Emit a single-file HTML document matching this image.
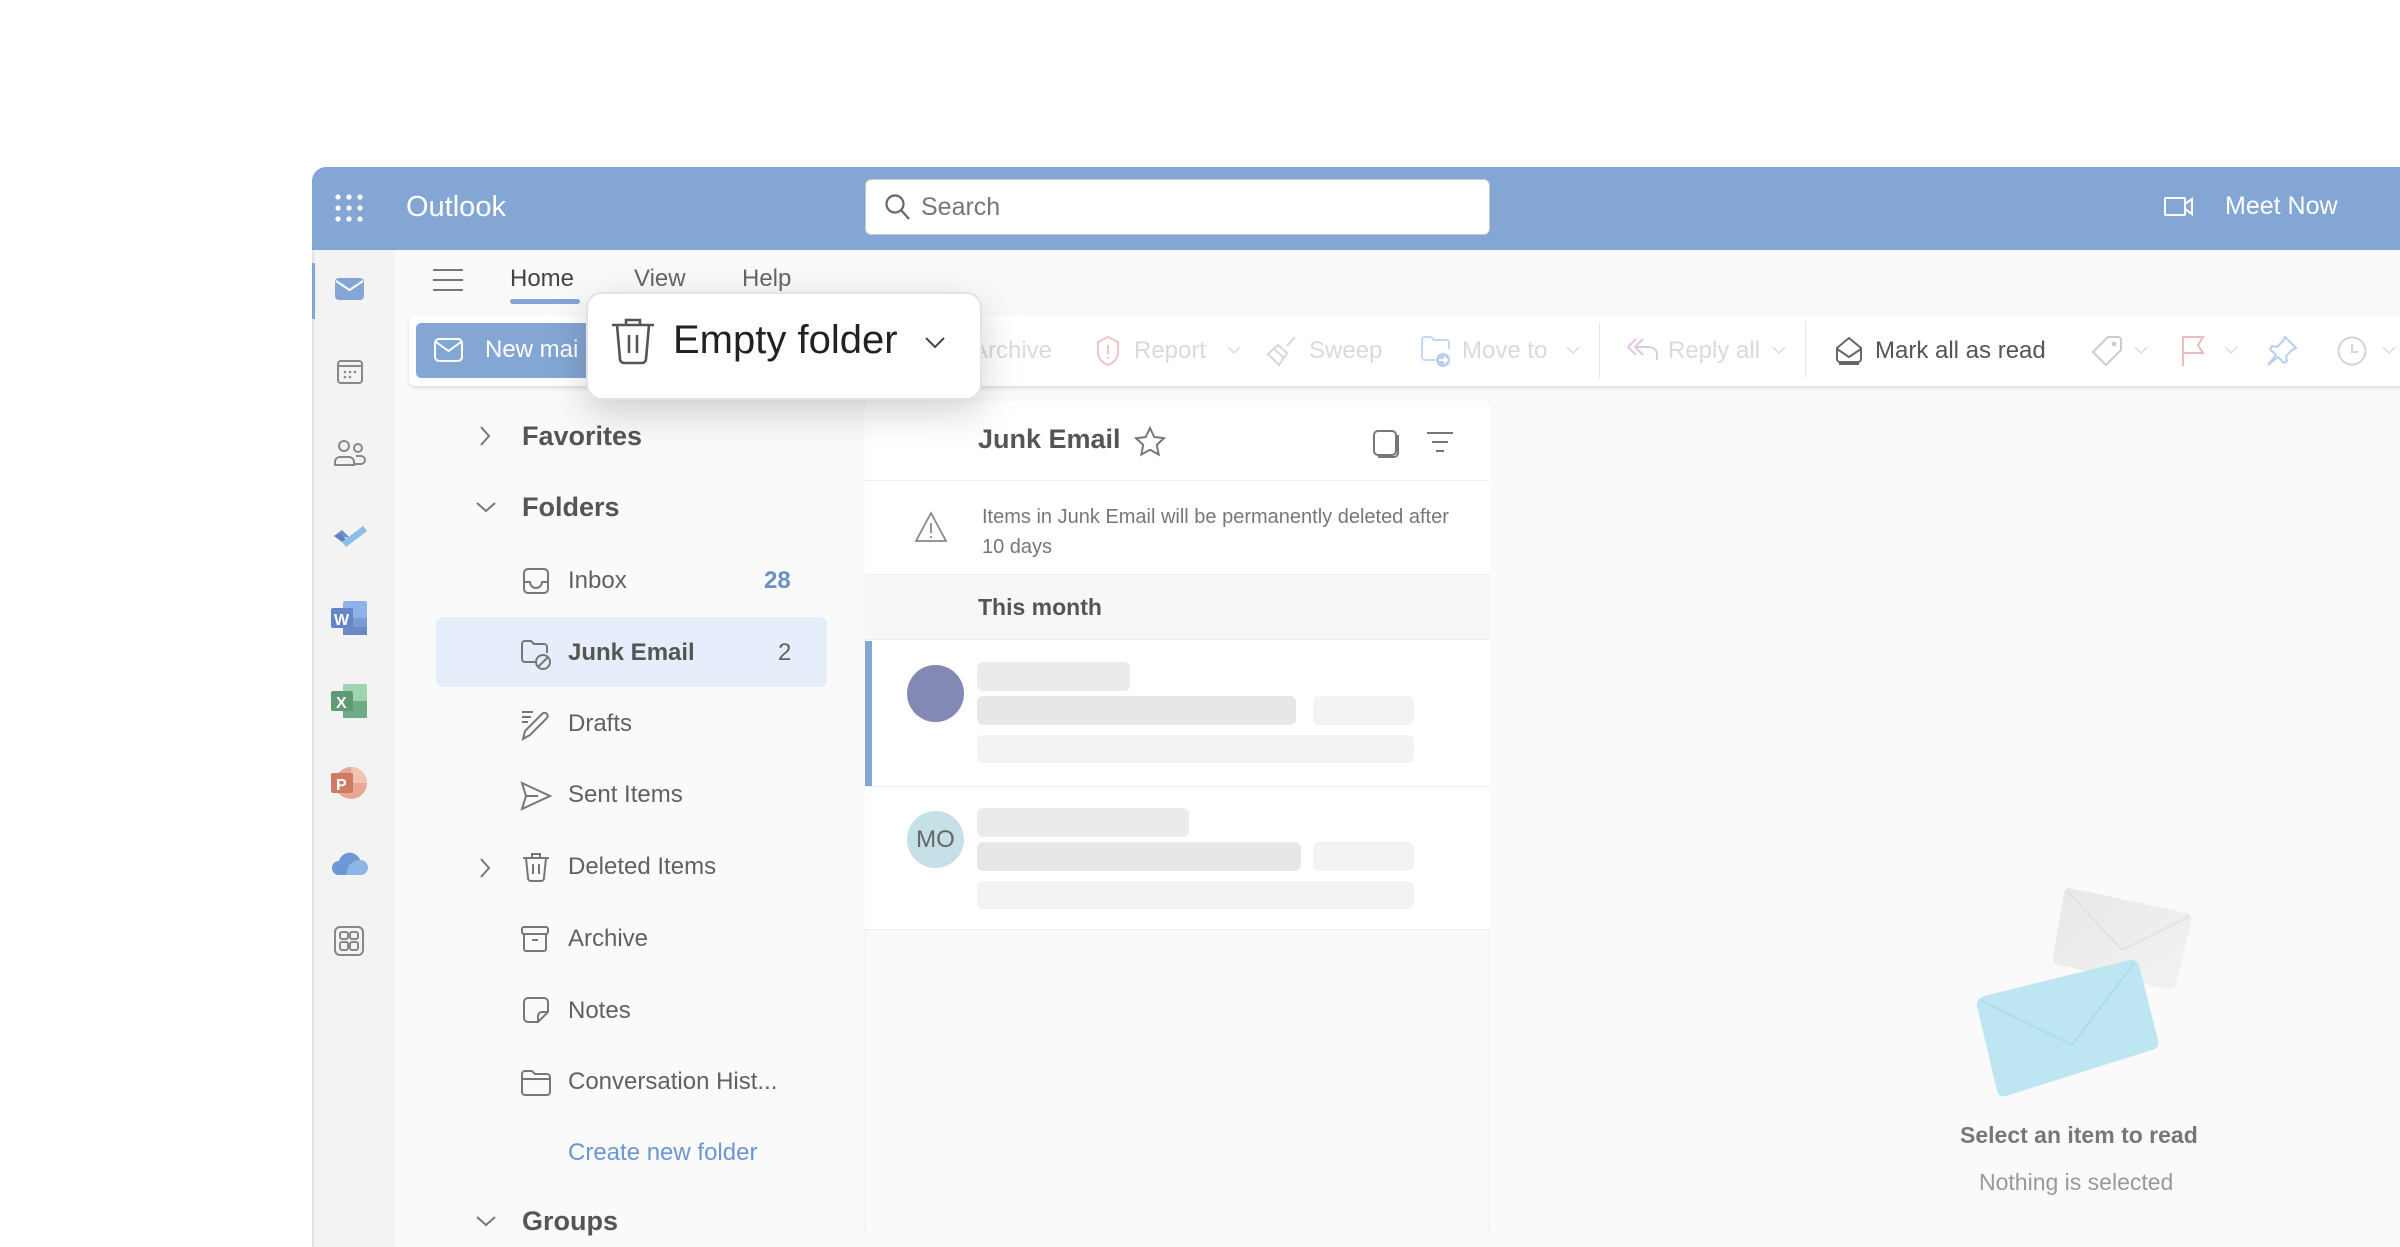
<!DOCTYPE html>
<html><head><meta charset="utf-8"><style>
*{box-sizing:border-box;margin:0;padding:0}
body{width:2400px;height:1226px;background:#fff;position:relative;overflow:hidden;font-family:"Liberation Sans",sans-serif;color:#616161}
.a{position:absolute}
svg{position:absolute;overflow:visible}
.t{position:absolute;white-space:nowrap}
.fold{font-size:24px;color:#616161}
.tb{font-size:24px;color:#dadada}
.sk{position:absolute;border-radius:6px}
</style></head><body>
<div class="a" style="left:312px;top:167px;width:2100px;height:1080px;background:#fafafa;border-top-left-radius:14px;overflow:hidden">
 <div class="a" style="left:0;top:0;width:2100px;height:83px;background:#84a6d4"></div>
 <div class="a" style="left:0;top:83px;width:83px;height:1000px;background:#f3f3f3;border-left:2px solid #e4e4e4"></div>
 <div class="a" style="left:0;top:96px;width:3px;height:56px;background:#84a6d4"></div>
</div>
<svg style="left:335px;top:194px" width="28" height="28" fill="#fff"><circle cx="3" cy="3" r="2.6"/><circle cx="14" cy="3" r="2.6"/><circle cx="25" cy="3" r="2.6"/><circle cx="3" cy="14" r="2.6"/><circle cx="14" cy="14" r="2.6"/><circle cx="25" cy="14" r="2.6"/><circle cx="3" cy="25" r="2.6"/><circle cx="14" cy="25" r="2.6"/><circle cx="25" cy="25" r="2.6"/></svg>
<div class="t" style="left:406px;top:191px;font-size:29px;color:#fff">Outlook</div>
<div class="a" style="left:865px;top:179px;width:625px;height:56px;background:#fff;border-radius:6px;border:1px solid #c8c8c8"></div>
<svg style="left:883px;top:193px" width="28" height="28" fill="none" stroke="#666" stroke-width="2.2"><circle cx="12" cy="11" r="8.5"/><path d="M18 17l8 9"/></svg>
<div class="t" style="left:921px;top:193px;font-size:25px;color:#777">Search</div>
<svg style="left:2164px;top:197px" width="30" height="20" fill="none" stroke="#fff" stroke-width="2"><rect x="1" y="1" width="20" height="17" rx="1"/><path d="M21 7l7-5v15l-7-5"/></svg>
<div class="t" style="left:2225px;top:192px;font-size:25px;color:#fff">Meet Now</div>
<svg style="left:335px;top:278px" width="30" height="22"><rect x="0" y="0" width="29" height="22" rx="4" fill="#84a6d4"/><path d="M1 3l13.5 9L28 3" stroke="#fff" stroke-width="2" fill="none"/></svg>
<svg style="left:337px;top:360px" width="26" height="24" fill="none" stroke="#888" stroke-width="2"><rect x="1" y="1" width="24" height="22" rx="3"/><path d="M1 6h24"/><g fill="#888" stroke="none"><circle cx="8" cy="12" r="1.3"/><circle cx="13" cy="12" r="1.3"/><circle cx="18" cy="12" r="1.3"/><circle cx="8" cy="17" r="1.3"/><circle cx="13" cy="17" r="1.3"/></g></svg>
<svg style="left:334px;top:440px" width="32" height="26" fill="none" stroke="#888" stroke-width="2"><circle cx="10" cy="6" r="5"/><path d="M1 25v-3a5 5 0 015-5h9a5 5 0 015 5v3z"/><circle cx="24" cy="8" r="4"/><path d="M20 24h7a4 4 0 004-4 4 4 0 00-4-4h-5"/></svg>
<svg style="left:332px;top:522px" width="36" height="26"><path d="M2 14l8-6 8 8z" fill="#6e8ed0"/><path d="M10 20L31 4l4 5L14 25z" fill="#8cbde9"/><path d="M2 14l8 6 4-3-6-5z" fill="#5f7fc4"/></svg>
<svg style="left:331px;top:601px" width="36" height="34"><rect x="12" y="0" width="24" height="34" rx="2" fill="#8fb3e8"/><rect x="12" y="17" width="24" height="9" fill="#7b9ad6"/><rect x="12" y="26" width="24" height="8" fill="#6c88c6"/><rect x="0" y="7" width="22" height="20" rx="2" fill="#6486c9"/><text x="3" y="24" font-size="16" font-weight="bold" fill="#fff" font-family="Liberation Sans">W</text></svg>
<svg style="left:331px;top:684px" width="36" height="34"><rect x="12" y="0" width="24" height="34" rx="2" fill="#9fd4b0"/><rect x="12" y="17" width="24" height="17" fill="#6fab86"/><rect x="0" y="7" width="22" height="20" rx="2" fill="#5e9b75"/><text x="5" y="24" font-size="16" font-weight="bold" fill="#fff" font-family="Liberation Sans">X</text></svg>
<svg style="left:331px;top:766px" width="36" height="34"><circle cx="20" cy="17" r="16" fill="#e8a792"/><path d="M20 1a16 16 0 0116 16H20z" fill="#f3c3b2"/><rect x="0" y="7" width="22" height="20" rx="2" fill="#cf7a62"/><text x="5" y="24" font-size="16" font-weight="bold" fill="#fff" font-family="Liberation Sans">P</text></svg>
<svg style="left:331px;top:852px" width="38" height="24"><path d="M8 23a7 7 0 010-14 11 11 0 0121-1 7.5 7.5 0 011 15z" fill="#8db5e6"/><path d="M8 23a7 7 0 010-14 11 11 0 0121-1c-8 0-12 5-14 15z" fill="#6f97d5"/></svg>
<svg style="left:334px;top:926px" width="30" height="30" fill="none" stroke="#888" stroke-width="2"><rect x="1" y="1" width="28" height="28" rx="5"/><rect x="6" y="6" width="8" height="7" rx="2"/><rect x="16" y="6" width="8" height="7" rx="2"/><rect x="6" y="16" width="8" height="8" rx="2"/><rect x="16" y="16" width="8" height="8" rx="2"/></svg>
<svg style="left:433px;top:269px" width="30" height="22" stroke="#777" stroke-width="2"><path d="M0 1h30M0 11h30M0 21h30"/></svg>
<div class="t" style="left:510px;top:265px;font-size:24px;color:#444">Home</div>
<div class="a" style="left:510px;top:299px;width:70px;height:5px;border-radius:3px;background:#84a6d4"></div>
<div class="t" style="left:634px;top:265px;font-size:24px;color:#666">View</div>
<div class="t" style="left:742px;top:265px;font-size:24px;color:#666">Help</div>
<div class="a" style="left:409px;top:315px;width:2000px;height:71px;background:#fff;border-radius:6px;box-shadow:0 2px 4px rgba(0,0,0,.12)"></div>
<div class="a" style="left:416px;top:323px;width:190px;height:55px;background:#84a6d4;border-radius:5px"></div>
<svg style="left:434px;top:338px" width="30" height="24" fill="none" stroke="#fff" stroke-width="2"><rect x="1" y="1" width="27" height="22" rx="4"/><path d="M2 4l12.5 9L27 4"/></svg>
<div class="t" style="left:485px;top:336px;font-size:24px;color:#fff">New mai</div>
<div class="t tb" style="left:972px;top:337px">Archive</div>
<svg style="left:1096px;top:336px" width="24" height="30" fill="none" stroke="#efc4c4" stroke-width="2"><path d="M12 1l10 5v10c0 7-5 11-10 13C7 27 2 23 2 16V6z"/><path d="M12 9v9M12 21v2"/></svg>
<div class="t tb" style="left:1134px;top:337px">Report</div>
<svg style="left:1227px;top:346px" width="14" height="8" fill="none" stroke="#ddd" stroke-width="1.5"><path d="M1 1l6 6 6-6"/></svg>
<svg style="left:1267px;top:336px" width="30" height="32" fill="none" stroke="#d8d8d8" stroke-width="2"><path d="M20 10L28 1M1 18l10-9 9 8-8 12z"/><path d="M8 14l9 8"/></svg>
<div class="t tb" style="left:1309px;top:337px">Sweep</div>
<svg style="left:1421px;top:336px" width="32" height="32" fill="none" stroke="#c5d7f2" stroke-width="2"><path d="M14 24H4a3 3 0 01-3-3V4a3 3 0 013-3h6l3 3h12a3 3 0 013 3v6"/><circle cx="22" cy="24" r="7" fill="#b9cfee" stroke="none"/><path d="M18 24h8M23 21l3 3-3 3" stroke="#fff"/></svg>
<div class="t tb" style="left:1462px;top:337px">Move to</div>
<svg style="left:1566px;top:346px" width="14" height="8" fill="none" stroke="#ddd" stroke-width="1.5"><path d="M1 1l6 6 6-6"/></svg>
<div class="a" style="left:1599px;top:322px;width:1px;height:56px;background:#e6e6e6"></div>
<svg style="left:1627px;top:338px" width="32" height="24" fill="none" stroke="#e3c6ea" stroke-width="2"><path d="M9 1L1 9l8 8M16 1L8 9l8 8M8 9h14a8 8 0 018 8v5"/></svg>
<div class="t tb" style="left:1668px;top:337px">Reply all</div>
<svg style="left:1772px;top:346px" width="14" height="8" fill="none" stroke="#ddd" stroke-width="1.5"><path d="M1 1l6 6 6-6"/></svg>
<div class="a" style="left:1805px;top:322px;width:1px;height:56px;background:#e6e6e6"></div>
<svg style="left:1834px;top:336px" width="30" height="30" fill="none" stroke="#666" stroke-width="2"><path d="M3 12l12-10 12 10v11a3 3 0 01-3 3H6a3 3 0 01-3-3z"/><path d="M3 13l12 8 12-8"/><path d="M5 28h20"/></svg>
<div class="t" style="left:1875px;top:337px;font-size:24px;color:#555">Mark all as read</div>
<svg style="left:2092px;top:336px" width="30" height="30" fill="none" stroke="#ccc" stroke-width="2"><path d="M16 1h10a3 3 0 013 3v10L14 29 1 16z"/><circle cx="22" cy="8" r="1.5" fill="#ccc"/></svg>
<svg style="left:2134px;top:346px" width="14" height="8" fill="none" stroke="#ddd" stroke-width="1.5"><path d="M1 1l6 6 6-6"/></svg>
<svg style="left:2181px;top:336px" width="24" height="30" fill="none" stroke="#eebcbc" stroke-width="2"><path d="M2 30V1h20l-5 8 5 8H2"/></svg>
<svg style="left:2224px;top:346px" width="14" height="8" fill="none" stroke="#ddd" stroke-width="1.5"><path d="M1 1l6 6 6-6"/></svg>
<svg style="left:2267px;top:336px" width="30" height="30" fill="none" stroke="#b7cff0" stroke-width="2"><path d="M18 1l11 11-4 2-6 6 1 5-3 2-6-6-10 8 8-10-6-6 2-3 5 1 6-6z"/></svg>
<svg style="left:2337px;top:336px" width="30" height="30" fill="none" stroke="#d4d4d4" stroke-width="2"><circle cx="15" cy="15" r="13.5"/><path d="M15 8v8h6"/></svg>
<svg style="left:2382px;top:346px" width="14" height="8" fill="none" stroke="#ddd" stroke-width="1.5"><path d="M1 1l6 6 6-6"/></svg>
<svg style="left:480px;top:426px" width="10" height="20" fill="none" stroke="#777" stroke-width="2"><path d="M1 1l8 9-8 9"/></svg>
<div class="t" style="left:522px;top:421px;font-size:27px;color:#555;font-weight:600">Favorites</div>
<svg style="left:476px;top:502px" width="20" height="10" fill="none" stroke="#777" stroke-width="2"><path d="M1 1l9 8 9-8"/></svg>
<div class="t" style="left:522px;top:492px;font-size:27px;color:#555;font-weight:600">Folders</div>
<svg style="left:523px;top:568px" width="26" height="26" fill="none" stroke="#777" stroke-width="2"><rect x="1" y="1" width="24" height="24" rx="4"/><path d="M1 14h6a6 6 0 0012 0h6"/></svg>
<div class="t fold" style="left:568px;top:567px">Inbox</div>
<div class="t" style="left:764px;top:567px;font-size:24px;color:#6c8fc4;font-weight:bold">28</div>
<div class="a" style="left:436px;top:617px;width:391px;height:70px;background:#e5eefa;border-radius:6px"></div>
<svg style="left:521px;top:640px" width="32" height="30" fill="none" stroke="#777" stroke-width="2"><path d="M14 22H4a3 3 0 01-3-3V4a3 3 0 013-3h6l3 3h10a3 3 0 013 3v6"/><circle cx="22" cy="22" r="7"/><path d="M17 27l10-10"/></svg>
<div class="t" style="left:568px;top:639px;font-size:24px;color:#555;font-weight:bold">Junk Email</div>
<div class="t fold" style="left:778px;top:639px">2</div>
<svg style="left:521px;top:710px" width="30" height="30" fill="none" stroke="#777" stroke-width="2"><path d="M1 2h11M1 7h9M1 12h6M2 29l2-8L21 4a3 3 0 015 4L9 25z"/></svg>
<div class="t fold" style="left:568px;top:710px">Drafts</div>
<svg style="left:521px;top:782px" width="30" height="28" fill="none" stroke="#777" stroke-width="2"><path d="M1 1l28 13L1 27l4-13zM5 14h12"/></svg>
<div class="t fold" style="left:568px;top:781px">Sent Items</div>
<svg style="left:480px;top:858px" width="10" height="20" fill="none" stroke="#777" stroke-width="2"><path d="M1 1l8 9-8 9"/></svg>
<svg style="left:522px;top:852px" width="28" height="30" fill="none" stroke="#777" stroke-width="2"><path d="M1 6h26M10 6V2h8v4M4 6l2 20a3 3 0 003 3h10a3 3 0 003-3l2-20M11 12v10M17 12v10"/></svg>
<div class="t fold" style="left:568px;top:853px">Deleted Items</div>
<svg style="left:521px;top:926px" width="28" height="26" fill="none" stroke="#777" stroke-width="2"><rect x="1" y="1" width="26" height="7" rx="2"/><path d="M3 8v15a2 2 0 002 2h18a2 2 0 002-2V8M11 14h6"/></svg>
<div class="t fold" style="left:568px;top:925px">Archive</div>
<svg style="left:523px;top:997px" width="26" height="26" fill="none" stroke="#777" stroke-width="2"><path d="M15 25H5a4 4 0 01-4-4V5a4 4 0 014-4h16a4 4 0 014 4v10zM25 15h-6a4 4 0 00-4 4v6"/></svg>
<div class="t fold" style="left:568px;top:997px">Notes</div>
<svg style="left:521px;top:1070px" width="30" height="26" fill="none" stroke="#777" stroke-width="2"><path d="M1 4a3 3 0 013-3h7l3 3h12a3 3 0 013 3v15a3 3 0 01-3 3H4a3 3 0 01-3-3zM1 9h28"/></svg>
<div class="t fold" style="left:568px;top:1068px">Conversation Hist...</div>
<div class="t" style="left:568px;top:1139px;font-size:24px;color:#6c95d6">Create new folder</div>
<svg style="left:476px;top:1216px" width="20" height="10" fill="none" stroke="#777" stroke-width="2"><path d="M1 1l9 8 9-8"/></svg>
<div class="t" style="left:522px;top:1206px;font-size:27px;color:#555;font-weight:600">Groups</div>
<div class="a" style="left:865px;top:401px;width:625px;height:830px;background:#fafafa;border-left:1px solid #ececec;border-right:1px solid #ececec"></div>
<div class="a" style="left:865px;top:401px;width:625px;height:529px;background:#fff;border-radius:6px 6px 0 0"></div>
<div class="t" style="left:978px;top:424px;font-size:27px;color:#555;font-weight:600">Junk Email</div>
<svg style="left:1135px;top:427px" width="30" height="30" fill="none" stroke="#777" stroke-width="2"><path d="M15 1l4.2 9 9.8 1.2-7.2 6.7 1.9 9.7L15 22.8l-8.7 4.8 1.9-9.7L1 11.2 10.8 10z"/></svg>
<svg style="left:1373px;top:430px" width="26" height="28" fill="none" stroke="#777" stroke-width="2"><rect x="1" y="1" width="22" height="24" rx="4"/><path d="M25 5v18a4 4 0 01-4 4H5"/></svg>
<svg style="left:1427px;top:432px" width="26" height="20" stroke="#777" stroke-width="2"><path d="M0 1h26M5 10h16M9 19h8"/></svg>
<div class="a" style="left:865px;top:480px;width:625px;height:1px;background:#efefef"></div>
<svg style="left:915px;top:512px" width="32" height="30" fill="none" stroke="#888" stroke-width="1.8"><path d="M16 1L1 29h30zM16 11v10M16 24v2"/></svg>
<div class="t" style="left:982px;top:502px;font-size:20px;color:#777;line-height:30px">Items in Junk Email will be permanently deleted after<br>10 days</div>
<div class="a" style="left:865px;top:574px;width:625px;height:66px;background:#f7f7f7;border-top:1px solid #ededed;border-bottom:1px solid #ededed"></div>
<div class="t" style="left:978px;top:594px;font-size:23px;color:#555;font-weight:600">This month</div>
<div class="a" style="left:865px;top:641px;width:7px;height:145px;background:#84a6d4"></div>
<div class="a" style="left:865px;top:786px;width:625px;height:1px;background:#ededed"></div>
<div class="a" style="left:865px;top:929px;width:625px;height:1px;background:#ededed"></div>
<div class="a" style="left:907px;top:665px;width:57px;height:57px;border-radius:50%;background:#8289b4"></div>
<div class="sk" style="left:977px;top:662px;width:153px;height:29px;background:#ebebeb"></div>
<div class="sk" style="left:977px;top:696px;width:319px;height:29px;background:#e7e7e7"></div>
<div class="sk" style="left:1313px;top:696px;width:101px;height:29px;background:#f3f3f3"></div>
<div class="sk" style="left:977px;top:735px;width:437px;height:28px;background:#f3f3f3"></div>
<div class="a" style="left:907px;top:811px;width:57px;height:57px;border-radius:50%;background:#c6e0e7;font-size:24px;color:#666;text-align:center;line-height:57px">MO</div>
<div class="sk" style="left:977px;top:808px;width:212px;height:29px;background:#ebebeb"></div>
<div class="sk" style="left:977px;top:842px;width:324px;height:29px;background:#e7e7e7"></div>
<div class="sk" style="left:1313px;top:842px;width:101px;height:29px;background:#f3f3f3"></div>
<div class="sk" style="left:977px;top:881px;width:437px;height:28px;background:#f3f3f3"></div>
<svg style="left:0;top:0" width="2400" height="1226">
 <defs><linearGradient id="g1" x1="0" y1="0" x2="1" y2="1"><stop offset="0" stop-color="#e8e8e8"/><stop offset="1" stop-color="#f2f2f2"/></linearGradient></defs>
 <path d="M2070 888L2187 913Q2193 916 2191 922L2176 985Q2174 990 2168 989L2058 965Q2052 963 2053 957L2064 893Q2066 887 2070 888Z" fill="url(#g1)"/>
 <path d="M2066 890L2122 950L2190 916" fill="none" stroke="#e2e2e2" stroke-width="2"/>
 <path d="M1984 996L2130 960Q2137 959 2139 965L2158 1040Q2160 1048 2152 1050L2006 1096Q1999 1098 1997 1091L1977 1006Q1976 999 1984 996Z" fill="#bde6f2"/>
 <path d="M1980 1000L2072 1045L2135 962" fill="none" stroke="#aedce9" stroke-width="2"/>
</svg>
<div class="t" style="left:1960px;top:1122px;font-size:23px;color:#777;font-weight:600">Select an item to read</div>
<div class="t" style="left:1979px;top:1169px;font-size:23px;color:#999">Nothing is selected</div>
<div class="a" style="left:586px;top:292px;width:396px;height:108px;background:#fff;border-radius:16px;border:2px solid #e3e3e3;box-shadow:0 12px 40px rgba(0,0,0,.18)"></div>
<svg style="left:611px;top:317px" width="44" height="48" fill="none" stroke="#555" stroke-width="2.6"><path d="M1 8h42M15 8V3h14v5M6 8l3 34a4 4 0 004 4h18a4 4 0 004-4l3-34M18 18v18M26 18v18"/></svg>
<div class="t" style="left:673px;top:318px;font-size:40px;color:#222">Empty folder</div>
<svg style="left:925px;top:337px" width="20" height="11" fill="none" stroke="#444" stroke-width="2"><path d="M1 1l9 9 9-9"/></svg>
</body></html>
